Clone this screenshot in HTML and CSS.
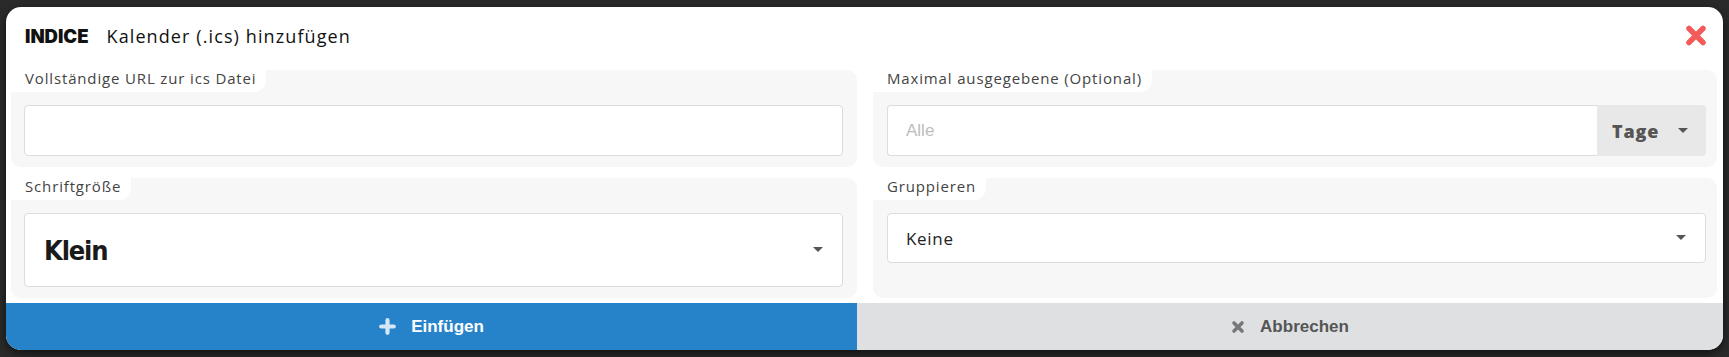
FILE: index.html
```html
<!DOCTYPE html>
<html lang="de">
<head>
    <meta charset="UTF-8">
    <title>Kalender (.ics) hinzufügen</title>
    <link rel="stylesheet" href="styles.css">
</head>
<body>
    <div class="dialog">
        <div class="dialog-head">
            <span class="brand">INDICE</span>
            <span class="title">Kalender (.ics) hinzufügen</span>
            <button class="close" type="button" aria-label="Schließen">
                <svg width="22" height="21" viewBox="0 0 22 21"><path d="M4 3.5 L18 17.5 M18 3.5 L4 17.5" stroke="#f45a5a" stroke-width="5.5" stroke-linecap="round"/></svg>
            </button>
        </div>

        <div class="dialog-body">
            <div class="field">
                <label class="field-label" for="url">Vollständige URL zur ics Datei</label>
                <input class="control" id="url" type="text">
            </div>
            <div class="field">
                <label class="field-label" for="max">Maximal ausgegebene (Optional)</label>
                <div class="input-group">
                    <input class="control" id="max" type="text" placeholder="Alle">
                    <div class="addon">Tage <span class="caret"></span></div>
                </div>
            </div>
            <div class="field">
                <label class="field-label" for="size">Schriftgröße</label>
                <div class="select select-big">
                    <select id="size">
                        <option>Klein</option>
                        <option>Mittel</option>
                        <option>Groß</option>
                    </select>
                </div>
            </div>
            <div class="field">
                <label class="field-label" for="group">Gruppieren</label>
                <div class="select">
                    <select id="group">
                        <option>Keine</option>
                        <option>Tag</option>
                        <option>Woche</option>
                    </select>
                </div>
            </div>
        </div>

        <div class="dialog-foot">
            <button class="btn btn-primary" type="button">
                <svg width="17" height="17" viewBox="0 0 17 17"><path d="M8.5 2.2 V14.8 M2.2 8.5 H14.8" stroke="#d5e6f5" stroke-width="4.2" stroke-linecap="round"/></svg>
                Einfügen
            </button>
            <button class="btn btn-cancel" type="button">
                <svg width="14" height="14" viewBox="0 0 14 14"><path d="M3 3 L11 11 M11 3 L3 11" stroke="#787878" stroke-width="3.6" stroke-linecap="round"/></svg>
                Abbrechen
            </button>
        </div>
    </div>
</body>
</html>
```

FILE: styles.css
```css
body {
    margin: 0;
    padding: 7px 6px;
    background: #2a2a2a;
    font-family: "Open Sans", sans-serif;
    color: #222;
}
.dialog {
    background: #fff;
    border-radius: 15px;
    overflow: hidden;
    height: 343px;
    display: flex;
    flex-direction: column;
    box-shadow: 0 3px 8px rgba(0, 0, 0, 0.6);
}
.dialog-head {
    height: 63px;
    flex: none;
    display: flex;
    align-items: center;
    padding: 0 16px 6px 19px;
    box-sizing: border-box;
}
.brand {
    font-family: "Inter", sans-serif;
    font-weight: 900;
    font-size: 18.5px;
    color: #111;
}
.title {
    margin-left: 18px;
    font-size: 18px;
    letter-spacing: 1.1px;
    color: #111;
}
.close {
    margin-left: auto;
    padding: 0;
    border: none;
    background: none;
    display: flex;
    cursor: pointer;
}
.dialog-body {
    flex: 1;
    display: grid;
    grid-template-columns: 846px 1fr;
    grid-template-rows: 97px 120px;
    gap: 11px 16px;
    padding: 0 6px 5px 5px;
}
.field {
    background: #f7f7f7;
    border-radius: 10px;
    display: flex;
    flex-direction: column;
    align-items: flex-start;
}
.field-label {
    background: #fff;
    height: 22px;
    box-sizing: border-box;
    padding: 0 10px 6px 14px;
    line-height: 16px;
    border-bottom-right-radius: 12px;
    font-size: 15px;
    letter-spacing: 0.85px;
    color: #444;
    margin-bottom: 13px;
}
.control {
    box-sizing: border-box;
    height: 51px;
    border: 1px solid #dcdcdc;
    border-radius: 4px;
    background: #fff;
    padding: 0 18px;
    font-size: 17px;
    font-family: "Liberation Sans", sans-serif;
    outline: none;
}
.field > .control {
    align-self: stretch;
    margin: 0 14px 0 13px;
}
.control::placeholder {
    color: #bdbdbd;
}
.input-group {
    align-self: stretch;
    margin: 0 11px 0 14px;
    display: flex;
}
.input-group .control {
    flex: 1;
    border-radius: 4px 0 0 4px;
    border-right: none;
}
.addon {
    width: 109px;
    box-sizing: border-box;
    height: 51px;
    background: #e8e8e8;
    border-radius: 0 4px 4px 0;
    display: flex;
    align-items: center;
    padding-left: 15px;
    font-weight: 800;
    font-size: 18px;
    letter-spacing: 0.8px;
    color: #555;
}
.addon .caret {
    margin-left: 19px;
}
.caret {
    width: 0;
    height: 0;
    border-left: 5px solid transparent;
    border-right: 5px solid transparent;
    border-top: 5px solid #555;
}
.select {
    align-self: stretch;
    margin: 0 11px 0 14px;
    position: relative;
}
.select::after {
    content: "";
    position: absolute;
    right: 20px;
    top: 22px;
    border-left: 5px solid transparent;
    border-right: 5px solid transparent;
    border-top: 5px solid #555;
}
.select select {
    appearance: none;
    width: 100%;
    box-sizing: border-box;
    height: 50px;
    border: 1px solid #dcdcdc;
    border-radius: 4px;
    background: #fff;
    padding: 0 18px;
    font-family: "Open Sans", sans-serif;
    font-size: 17px;
    letter-spacing: 0.7px;
    color: #222;
    outline: none;
}
.select-big {
    margin: 0 14px 0 13px;
}
.select-big select {
    height: 74px;
    padding-left: 19px;
    font-family: "DejaVu Sans", sans-serif;
    font-stretch: condensed;
    font-weight: bold;
    font-size: 27px;
    letter-spacing: -1.2px;
    color: #1a1a1a;
}
.select-big::after {
    top: 34px;
}
.dialog-foot {
    height: 47px;
    flex: none;
    display: grid;
    grid-template-columns: 851px 1fr;
}
.btn {
    border: none;
    display: flex;
    align-items: center;
    justify-content: center;
    gap: 15px;
    font-family: "Liberation Sans", Arial, sans-serif;
    font-weight: bold;
    font-size: 17px;
    cursor: pointer;
}
.btn-primary {
    background: #2783c9;
    color: #fff;
}
.btn-cancel {
    background: #dfe0e2;
    color: #555;
}
```
